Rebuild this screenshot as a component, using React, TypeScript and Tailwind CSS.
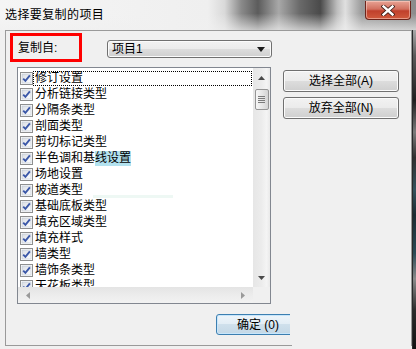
import React from 'react';

const items = [
  '修订设置',
  '分析链接类型',
  '分隔条类型',
  '剖面类型',
  '剪切标记类型',
  '半色调和基线设置',
  '场地设置',
  '坡道类型',
  '基础底板类型',
  '填充区域类型',
  '填充样式',
  '墙类型',
  '墙饰条类型',
  '天花板类型',
];

const CheckBox = () => (
  <svg width="13" height="13" viewBox="0 0 13 13" className="shrink-0">
    <defs>
      <linearGradient id="cbfill" x1="0" y1="0" x2="1" y2="1">
        <stop offset="0" stopColor="#d9dde3" />
        <stop offset="1" stopColor="#ffffff" />
      </linearGradient>
    </defs>
    <rect x="0.5" y="0.5" width="12" height="12" fill="#fff" stroke="#8e8f8f" />
    <rect x="2" y="2" width="9" height="9" fill="url(#cbfill)" stroke="#b8c3cf" strokeWidth="0.6" />
    <path d="M3.2 6.6 L5.4 8.9 L9.9 3.4" fill="none" stroke="#3b58a8" strokeWidth="1.9" />
  </svg>
);

const winBtn =
  'border border-[#707070] rounded-[3px] bg-[linear-gradient(to_bottom,#f2f2f2_0%,#ebebeb_50%,#dddddd_50%,#cfcfcf_100%)] shadow-[inset_0_0_0_1px_#fbfbfb] flex items-center justify-center text-[12px] text-black';

export default function App() {
  return (
    <div className="w-[416px] h-[349px] overflow-hidden bg-[#f0f0f0] flex flex-col font-['Liberation_Sans','Noto_Sans_CJK_SC',sans-serif] text-black">
      {/* Title bar */}
      <div className="h-[30px] shrink-0 flex items-center justify-between bg-[linear-gradient(to_bottom,rgba(240,240,240,0)_45%,rgba(240,240,240,0.7)_100%),linear-gradient(to_right,#f5f5f5_0%,#efefef_50%,#d9d9d9_54%,#8a8a8a_58%,#5c5c5c_62%,#a8a8a8_67%,#6a6a6a_72%,#4a4a4a_77%,#bdbdbd_81%,#e0e0e0_83%,#9a9a9a_87%,#8c8c8c_100%)]">
        <span className="pl-[5px] text-[12px] leading-[15px] tracking-[0.4px]">选择要复制的项目</span>
        <div className="self-start mt-px mr-[5px] w-[46px] h-[19px] rounded-b-[4px] border border-t-0 border-[#6d241b] bg-[linear-gradient(to_bottom,#e8a394_0%,#d2705f_45%,#c0402c_55%,#d05a3d_100%)] flex items-center justify-center shadow-[inset_0_0_0_1px_rgba(255,220,210,0.5)]">
          <svg width="14" height="11" viewBox="0 0 14 11">
            <path d="M2.5 1.5 L11.5 9.5 M11.5 1.5 L2.5 9.5" stroke="#3a1a14" strokeWidth="4" strokeLinecap="square" />
            <path d="M2.5 1.5 L11.5 9.5 M11.5 1.5 L2.5 9.5" stroke="#ffffff" strokeWidth="2.4" strokeLinecap="square" />
          </svg>
        </div>
      </div>

      {/* Body */}
      <div className="flex flex-1">
        <div className="w-[412px] pl-[5px]">
          <div className="h-[316px] w-[407px] border-t border-l border-r border-[#9a9a9a] flex flex-col">
            {/* Row: copy from */}
            <div className="flex items-start mt-[2px]">
              <div className="ml-[4px] w-[72px] h-[29px] border-[3px] border-[#ff0000] flex items-center pl-[5px] text-[12px]">
                复制自:
              </div>
              <div className="ml-[25px] mt-[7px] w-[165px] h-[18px] border border-[#707070] rounded-[3px] bg-[linear-gradient(to_bottom,#f2f2f2_0%,#ebebeb_50%,#dddddd_50%,#cfcfcf_100%)] shadow-[inset_0_0_0_1px_#fbfbfb] flex items-center justify-between pl-[4px] pr-[6px] text-[12px]">
                <span>项目1</span>
                <svg width="8" height="5" viewBox="0 0 8 5">
                  <path d="M0 0 H8 L4 5 Z" fill="#1a1a1a" />
                </svg>
              </div>
            </div>

            {/* Row: list + buttons */}
            <div className="flex items-start mt-[5px]">
              <div className="ml-[11px] w-[254px] h-[237px] border border-[#828790] bg-white flex flex-col">
                <div className="flex h-[219px]">
                  <div className="relative flex-1 overflow-hidden pt-[2px]">
                    {items.map((t, i) => (
                      <div key={t} className="flex items-center h-4">
                        <div className="ml-[2px]">
                          <CheckBox />
                        </div>
                        <div
                          className={`flex-1 mr-px h-[15px] pl-px flex items-center text-[12px] leading-[15px] whitespace-nowrap border ${
                            i === 0 ? 'border-dotted border-black' : 'border-transparent'
                          }`}
                        >
                          {i === 5 ? (
                            <>
                              半色调和基<span className="bg-[#b3e2ef]">线设置</span>
                            </>
                          ) : (
                            t
                          )}
                        </div>
                      </div>
                    ))}
                    <div className="absolute left-[75px] top-[127px] w-[80px] h-[3px] bg-[#eef8f4]" />
                  </div>
                  {/* vertical scrollbar */}
                  <div className="w-[17px] h-full flex flex-col items-center bg-[linear-gradient(to_right,#e6e6e6_0%,#ececec_50%,#f4f4f4_80%,#e9e9e9_100%)]">
                    <div className="h-[19px] flex items-center justify-center">
                      <svg width="7" height="4" viewBox="0 0 7 4">
                        <path d="M0 4 L3.5 0 L7 4 Z" fill="#4a4a4a" />
                      </svg>
                    </div>
                    <div className="mt-[2px] w-[14px] h-[21px] border border-[#959595] rounded-[2px] bg-[linear-gradient(to_right,#f6f6f6_0%,#e6e6e6_50%,#d4d4d4_100%)] flex flex-col items-center justify-center gap-px">
                      <div className="w-[7px] h-px bg-[#7a7a7a]" />
                      <div className="w-[7px] h-px bg-[#7a7a7a]" />
                      <div className="w-[7px] h-px bg-[#7a7a7a]" />
                      <div className="w-[7px] h-px bg-[#7a7a7a]" />
                    </div>
                    <div className="mt-auto h-[19px] flex items-center justify-center">
                      <svg width="7" height="4" viewBox="0 0 7 4">
                        <path d="M0 0 L7 0 L3.5 4 Z" fill="#4a4a4a" />
                      </svg>
                    </div>
                  </div>
                </div>
                {/* horizontal scrollbar */}
                <div className="flex h-[16px]">
                  <div className="flex-1 flex items-center justify-between px-[8px] bg-[linear-gradient(to_bottom,#e4e4e4_0%,#ececec_50%,#f2f2f2_100%)]">
                    <svg width="4" height="7" viewBox="0 0 4 7">
                      <path d="M4 0 L0 3.5 L4 7 Z" fill="#9a9a9a" />
                    </svg>
                    <svg width="4" height="7" viewBox="0 0 4 7">
                      <path d="M0 0 L4 3.5 L0 7 Z" fill="#9a9a9a" />
                    </svg>
                  </div>
                  <div className="w-[17px] bg-[#f0f0f0]" />
                </div>
              </div>

              <div className="ml-[12px] mt-[3px] flex flex-col gap-[5px]">
                <div className={`${winBtn} w-[116px] h-[22px]`}>选择全部(A)</div>
                <div className={`${winBtn} w-[116px] h-[22px]`}>放弃全部(N)</div>
              </div>
            </div>

            {/* OK button (clipped) */}
            <div className="ml-[210px] mt-[10px] w-[74px] h-[21px] overflow-hidden">
              <div className="w-[84px] h-[21px] border border-[#3c7fb1] rounded-[3px] bg-[linear-gradient(to_bottom,#eef5fa_0%,#e2edf5_50%,#cfe0ec_50%,#c4d8e6_100%)] shadow-[inset_0_0_0_1px_#c8e6fb] flex items-center justify-center text-[12px]">
                确定 (0)
              </div>
            </div>

            <div className="mt-auto -ml-px w-[287px] h-px bg-[#9a9a9a]" />
          </div>
        </div>
        {/* desktop showing through at the right edge */}
        <div className="w-[4px] border-l border-[#2a2a2a] bg-[linear-gradient(to_bottom,#a8a8a8_0%,#5a5a5a_8%,#1e1e1e_22%,#7a7a7a_32%,#2f2f2f_40%,#35525c_50%,#1c2b31_58%,#2b4a55_70%,#8a8a8a_78%,#2a2a2a_88%,#111111_100%)]" />
      </div>
    </div>
  );
}
